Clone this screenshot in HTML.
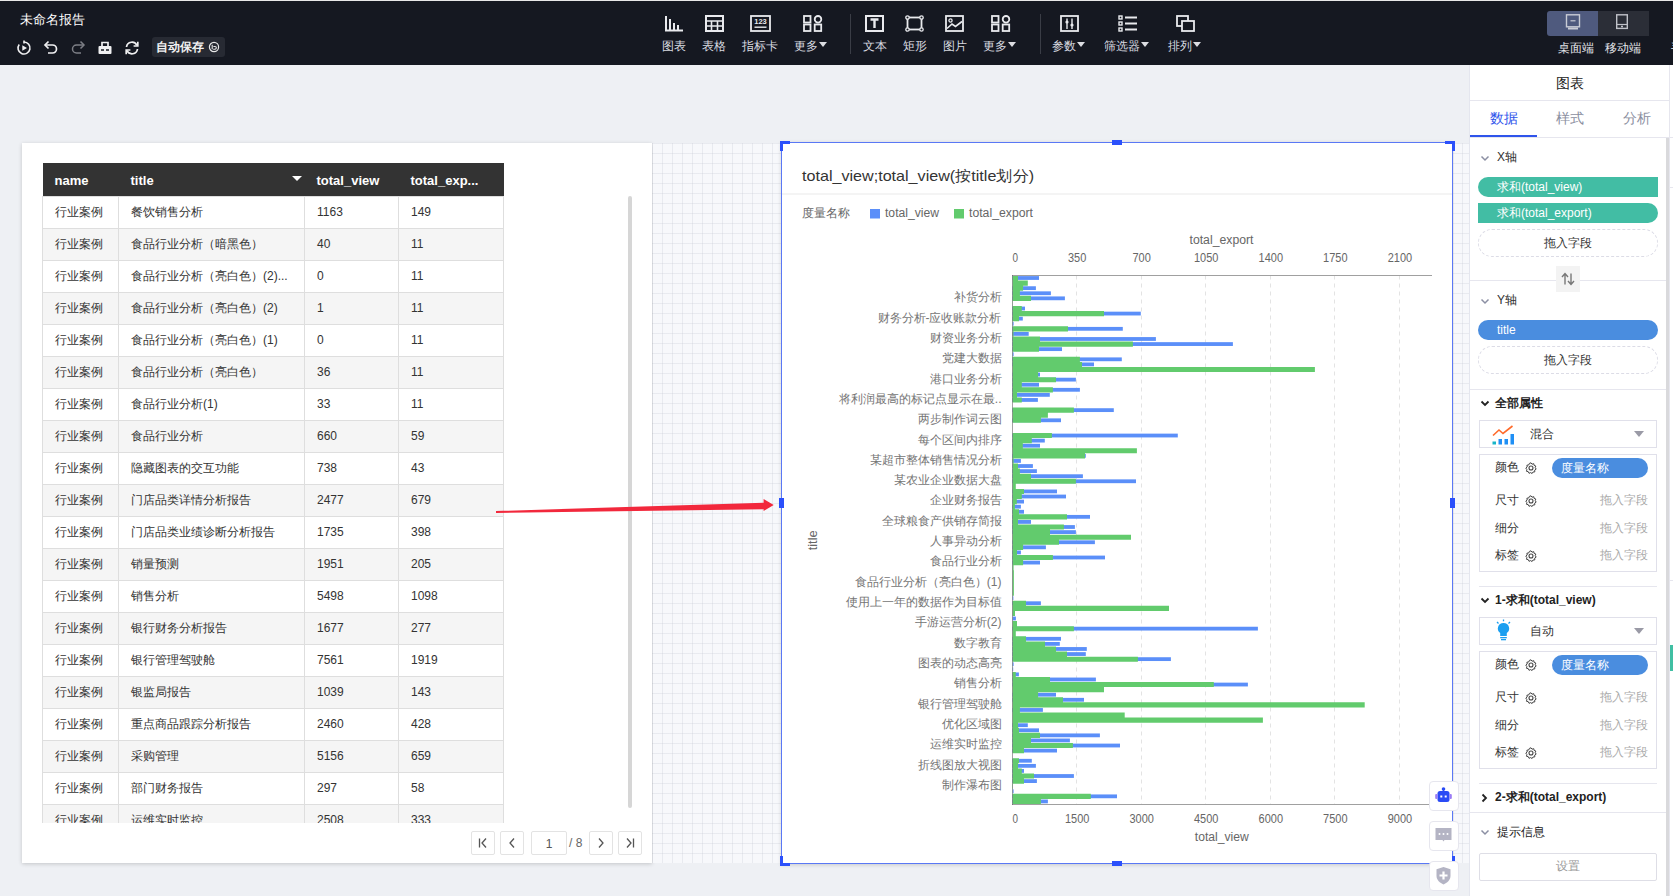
<!DOCTYPE html>
<html><head><meta charset="utf-8">
<style>
*{box-sizing:border-box;margin:0;padding:0}
html,body{width:1673px;height:896px;overflow:hidden;background:#eef0f4;font-family:"Liberation Sans",sans-serif;color:#333}
.abs{position:absolute}
#top{position:absolute;left:0;top:0;width:1673px;height:65px;background:#151821;border-top:1px solid #e8e8e8}
.tl{font-weight:500}
.t{position:absolute;white-space:nowrap;line-height:1}
.tb{position:absolute;color:#d6d8de;font-size:12px;text-align:center;white-space:nowrap}
.tb svg{position:absolute}
#paper{position:absolute;left:22px;top:143px;width:1447px;height:720px;background-color:#f7f8fb;
 background-image:linear-gradient(rgba(195,198,210,.28) 1px,transparent 1px),linear-gradient(90deg,rgba(195,198,210,.28) 1px,transparent 1px);
 background-size:10px 10px;background-position:0 0}
#tcard{position:absolute;left:22px;top:143px;width:630px;height:720px;background:#fff;box-shadow:0 1px 4px rgba(0,0,0,.18)}
table{border-collapse:collapse;position:absolute;left:42px;top:163px;table-layout:fixed}
#tclip{position:absolute;left:42px;top:163px;width:462px;height:660px;overflow:hidden}
#tclip table{left:0;top:0}
th{background:#333;color:#fff;font-weight:bold;font-size:13px;height:33px;text-align:left;padding-left:12px;padding-top:2px}
td{height:32px;font-size:12px;color:#333;border:1px solid #dedede;padding-left:12px;white-space:nowrap;overflow:hidden}
tr:nth-child(odd) td{background:#f5f5f5}
#ccard{position:absolute;left:781px;top:142px;width:672px;height:722px;background:#fff;border:1px solid #5a78f5;box-shadow:0 1px 4px rgba(0,0,0,.16)}
#panel{position:absolute;left:1469px;top:65px;width:204px;height:831px;background:#fff;border-left:1px solid #e4e6ee}
.pg{position:absolute;top:831px;width:24px;height:24px;border:1px solid #e3e3e3;border-radius:2px;background:#fff}
.pg svg{position:absolute;left:-1px;top:-1px}
.fb{position:absolute;left:1429px;width:30px;height:30px;background:#fff;border:1px solid #e6e6ee;border-radius:4px}
.fb svg{position:absolute;left:-1px;top:-1px}
.paper2{position:absolute;top:143px;height:720px;background-color:#f7f8fb;background-image:linear-gradient(rgba(195,198,210,.28) 1px,transparent 1px),linear-gradient(90deg,rgba(195,198,210,.28) 1px,transparent 1px);background-size:10px 10px}
</style></head><body>
<div id="top">
 <div class="t" style="left:20px;top:12px;font-size:13px;color:#fff">未命名报告</div>
<svg class="abs" style="left:664px;top:14px" width="21" height="18" viewBox="0 0 21 18"><path d="M2 1V15.5H19" fill="none" stroke="#e9eaee" stroke-width="2"/><rect x="5" y="4" width="2" height="11" fill="#e9eaee"/><rect x="9" y="8" width="2" height="7" fill="#e9eaee"/><rect x="13" y="10" width="2" height="5" fill="#e9eaee"/></svg>
<div class="t" style="left:662px;top:39px;font-size:12px;color:#d9dbe0">图表</div>
<svg class="abs" style="left:705px;top:14px" width="21" height="18" viewBox="0 0 21 18"><rect x="1" y="1" width="17" height="15" fill="none" stroke="#e9eaee" stroke-width="2"/><path d="M1 6H18M1 11H18M6.5 6V16M12.5 6V16" stroke="#e9eaee" stroke-width="1.6"/></svg>
<div class="t" style="left:702px;top:39px;font-size:12px;color:#d9dbe0">表格</div>
<svg class="abs" style="left:750px;top:14px" width="21" height="18" viewBox="0 0 21 18"><rect x="1" y="1" width="19" height="15" fill="none" stroke="#e9eaee" stroke-width="1.8"/><text x="10.5" y="9" font-size="7.5" font-family="Liberation Sans" font-weight="bold" fill="#e9eaee" text-anchor="middle">123</text><path d="M4.5 12.2H16.5" stroke="#e9eaee" stroke-width="1.4"/></svg>
<div class="t" style="left:742px;top:39px;font-size:12px;color:#d9dbe0">指标卡</div>
<svg class="abs" style="left:803px;top:14px" width="21" height="18" viewBox="0 0 21 18"><rect x="1" y="1" width="6.5" height="6.5" fill="none" stroke="#e9eaee" stroke-width="1.8"/><circle cx="15" cy="4.3" r="3.3" fill="none" stroke="#e9eaee" stroke-width="1.8"/><rect x="1" y="9.5" width="6.5" height="6.5" fill="none" stroke="#e9eaee" stroke-width="1.8"/><rect x="11.7" y="9.5" width="6.5" height="6.5" fill="none" stroke="#e9eaee" stroke-width="1.8"/></svg>
<div class="t" style="left:794px;top:39px;font-size:12px;color:#d9dbe0">更多<span style="display:inline-block;width:0;height:0;border-left:4px solid transparent;border-right:4px solid transparent;border-top:5px solid #dcdde2;vertical-align:3px;margin-left:1px"></span></div>
<svg class="abs" style="left:865px;top:14px" width="21" height="18" viewBox="0 0 21 18"><rect x="1" y="1" width="17" height="15" fill="none" stroke="#e9eaee" stroke-width="2"/><path d="M5.5 4.5H13.5M9.5 4.5V13" stroke="#e9eaee" stroke-width="2.4"/></svg>
<div class="t" style="left:863px;top:39px;font-size:12px;color:#d9dbe0">文本</div>
<svg class="abs" style="left:905px;top:14px" width="21" height="18" viewBox="0 0 21 18"><rect x="2.5" y="2.5" width="14" height="12" fill="none" stroke="#e9eaee" stroke-width="1.8"/><g fill="#151821" stroke="#e9eaee" stroke-width="1.3"><circle cx="2.5" cy="2.5" r="1.7"/><circle cx="16.5" cy="2.5" r="1.7"/><circle cx="2.5" cy="14.5" r="1.7"/><circle cx="16.5" cy="14.5" r="1.7"/></g></svg>
<div class="t" style="left:903px;top:39px;font-size:12px;color:#d9dbe0">矩形</div>
<svg class="abs" style="left:945px;top:14px" width="21" height="18" viewBox="0 0 21 18"><rect x="1" y="1" width="17" height="15" fill="none" stroke="#e9eaee" stroke-width="1.8"/><circle cx="5.5" cy="5.5" r="1.6" fill="none" stroke="#e9eaee" stroke-width="1.3"/><path d="M2 13.5L7 9L10.5 11.5L17 6.5" fill="none" stroke="#e9eaee" stroke-width="1.6"/></svg>
<div class="t" style="left:943px;top:39px;font-size:12px;color:#d9dbe0">图片</div>
<svg class="abs" style="left:991px;top:14px" width="21" height="18" viewBox="0 0 21 18"><rect x="1" y="1" width="6.5" height="6.5" fill="none" stroke="#e9eaee" stroke-width="1.8"/><circle cx="15" cy="4.3" r="3.3" fill="none" stroke="#e9eaee" stroke-width="1.8"/><rect x="1" y="9.5" width="6.5" height="6.5" fill="none" stroke="#e9eaee" stroke-width="1.8"/><rect x="11.7" y="9.5" width="6.5" height="6.5" fill="none" stroke="#e9eaee" stroke-width="1.8"/></svg>
<div class="t" style="left:983px;top:39px;font-size:12px;color:#d9dbe0">更多<span style="display:inline-block;width:0;height:0;border-left:4px solid transparent;border-right:4px solid transparent;border-top:5px solid #dcdde2;vertical-align:3px;margin-left:1px"></span></div>
<svg class="abs" style="left:1060px;top:14px" width="21" height="18" viewBox="0 0 21 18"><rect x="1" y="1" width="17" height="15" fill="none" stroke="#e9eaee" stroke-width="1.8"/><path d="M7 3.5V14M12 3.5V14" stroke="#e9eaee" stroke-width="1.4"/><circle cx="7" cy="7" r="1.6" fill="#e9eaee"/><circle cx="12" cy="10" r="1.6" fill="#e9eaee"/></svg>
<div class="t" style="left:1052px;top:39px;font-size:12px;color:#d9dbe0">参数<span style="display:inline-block;width:0;height:0;border-left:4px solid transparent;border-right:4px solid transparent;border-top:5px solid #dcdde2;vertical-align:3px;margin-left:1px"></span></div>
<svg class="abs" style="left:1118px;top:14px" width="21" height="18" viewBox="0 0 21 18"><g fill="none" stroke="#e9eaee" stroke-width="1.4"><rect x="1" y="1" width="3" height="3"/><rect x="1" y="7" width="3" height="3"/><rect x="1" y="13" width="3" height="3"/></g><path d="M7 2.5H19M7 8.5H19M7 14.5H19" stroke="#e9eaee" stroke-width="1.8"/></svg>
<div class="t" style="left:1104px;top:39px;font-size:12px;color:#d9dbe0">筛选器<span style="display:inline-block;width:0;height:0;border-left:4px solid transparent;border-right:4px solid transparent;border-top:5px solid #dcdde2;vertical-align:3px;margin-left:1px"></span></div>
<svg class="abs" style="left:1176px;top:14px" width="21" height="18" viewBox="0 0 21 18"><rect x="1" y="1" width="11" height="10" fill="none" stroke="#e9eaee" stroke-width="1.8"/><rect x="6" y="6" width="12" height="10" fill="#151821" stroke="#e9eaee" stroke-width="1.8"/></svg>
<div class="t" style="left:1168px;top:39px;font-size:12px;color:#d9dbe0">排列<span style="display:inline-block;width:0;height:0;border-left:4px solid transparent;border-right:4px solid transparent;border-top:5px solid #dcdde2;vertical-align:3px;margin-left:1px"></span></div>
<div class="abs" style="left:850px;top:13px;width:1px;height:40px;background:#3a3d46"></div>
<div class="abs" style="left:1040px;top:13px;width:1px;height:40px;background:#3a3d46"></div>
<svg class="abs" style="left:16px;top:39px" width="16" height="16" viewBox="0 0 16 16"><path d="M8 2A6 6 0 1 1 3.2 4.4" fill="none" stroke="#f0f0f2" stroke-width="1.6"/><path d="M8 0.5V3.5" stroke="#f0f0f2" stroke-width="1.6"/><path d="M6.3 5.3L11 8L6.3 10.7Z" fill="#f0f0f2"/></svg>
<svg class="abs" style="left:43px;top:39px" width="16" height="16" viewBox="0 0 16 16"><path d="M2.5 5H9.5A4 4 0 0 1 9.5 13H5" fill="none" stroke="#f0f0f2" stroke-width="1.7"/><path d="M5.5 1.5L2 5L5.5 8.5" fill="none" stroke="#f0f0f2" stroke-width="1.7"/></svg>
<svg class="abs" style="left:70px;top:39px" width="16" height="16" viewBox="0 0 16 16"><path d="M13.5 5H6.5A4 4 0 0 0 6.5 13H11" fill="none" stroke="#7d7f86" stroke-width="1.5"/><path d="M10.5 1.5L14 5L10.5 8.5" fill="none" stroke="#7d7f86" stroke-width="1.5"/></svg>
<svg class="abs" style="left:97px;top:39px" width="16" height="16" viewBox="0 0 16 16"><path d="M5 6V2.5H11V6" fill="none" stroke="#f0f0f2" stroke-width="1.7"/><rect x="1.5" y="6" width="13" height="8" rx="1" fill="#f0f0f2"/><path d="M4 10H7M9 10H12" stroke="#151821" stroke-width="1.4"/></svg>
<svg class="abs" style="left:124px;top:39px" width="16" height="16" viewBox="0 0 16 16"><path d="M2.5 7A5.5 5.5 0 0 1 13 5.5M13.5 9A5.5 5.5 0 0 1 3 10.5" fill="none" stroke="#f0f0f2" stroke-width="1.7"/><path d="M13.8 1.8V6H9.6M2.2 14.2V10H6.4" fill="none" stroke="#f0f0f2" stroke-width="1.7"/></svg>
<div class="abs" style="left:152px;top:36px;width:73px;height:20px;background:#272a33;border-radius:3px"></div>
<div class="t" style="left:156px;top:40px;font-size:12px;color:#f2f2f2;font-weight:bold">自动保存</div>
<svg class="abs" style="left:208px;top:40px" width="12" height="12" viewBox="0 0 12 12"><circle cx="6" cy="6" r="4.6" fill="none" stroke="#e8e8e8" stroke-width="1.2"/><path d="M4.2 3.8V8.2M5.2 8.2H7A1.3 1.3 0 0 0 7 5.5H5.4" fill="none" stroke="#e8e8e8" stroke-width="1.1"/></svg>
<div class="abs" style="left:1547px;top:10px;width:51px;height:25px;background:#4f5a7e;border-radius:3px 0 0 3px"></div>
<div class="abs" style="left:1598px;top:10px;width:51px;height:25px;background:#2b2e37;border-radius:0"></div>
<svg class="abs" style="left:1565px;top:13px" width="16" height="16" viewBox="0 0 16 16"><rect x="1.5" y="0.8" width="13" height="12" fill="none" stroke="#c9ccd6" stroke-width="1.4"/><path d="M5.5 6.8H10.5" stroke="#c9ccd6" stroke-width="1.2"/><rect x="3" y="13.5" width="10" height="2" fill="#c9ccd6"/></svg>
<svg class="abs" style="left:1615px;top:13px" width="14" height="16" viewBox="0 0 14 16"><rect x="1.7" y="0.8" width="10.6" height="13.6" fill="none" stroke="#c0c2c9" stroke-width="1.4"/><path d="M1.7 10.5H12.3" stroke="#c0c2c9" stroke-width="1.2"/><rect x="6" y="11.7" width="2" height="1.6" fill="#c0c2c9"/></svg>
<div class="t" style="left:1558px;top:41px;font-size:12px;color:#e4e5ea">桌面端</div>
<div class="t" style="left:1605px;top:41px;font-size:12px;color:#e4e5ea">移动端</div>
<div class="t" style="left:1671px;top:41px;font-size:12px;color:#e4e5ea">手</div>
</div>
<div id="paper"></div>
<div id="tcard"></div>
<div id="tclip"><table>
<colgroup><col style="width:76px"><col style="width:186px"><col style="width:94px"><col style="width:105px"></colgroup>
<tr><th>name</th><th style="position:relative">title<span style="position:absolute;left:173px;top:13px;width:0;height:0;border-left:5px solid transparent;border-right:5px solid transparent;border-top:5px solid #fff"></span></th><th>total_view</th><th>total_exp...</th></tr>
<tr><td>行业案例</td><td>餐饮销售分析</td><td class="n">1163</td><td class="n">149</td></tr><tr><td>行业案例</td><td>食品行业分析（暗黑色）</td><td class="n">40</td><td class="n">11</td></tr><tr><td>行业案例</td><td>食品行业分析（亮白色）(2)...</td><td class="n">0</td><td class="n">11</td></tr><tr><td>行业案例</td><td>食品行业分析（亮白色）(2)</td><td class="n">1</td><td class="n">11</td></tr><tr><td>行业案例</td><td>食品行业分析（亮白色）(1)</td><td class="n">0</td><td class="n">11</td></tr><tr><td>行业案例</td><td>食品行业分析（亮白色）</td><td class="n">36</td><td class="n">11</td></tr><tr><td>行业案例</td><td>食品行业分析(1)</td><td class="n">33</td><td class="n">11</td></tr><tr><td>行业案例</td><td>食品行业分析</td><td class="n">660</td><td class="n">59</td></tr><tr><td>行业案例</td><td>隐藏图表的交互功能</td><td class="n">738</td><td class="n">43</td></tr><tr><td>行业案例</td><td>门店品类详情分析报告</td><td class="n">2477</td><td class="n">679</td></tr><tr><td>行业案例</td><td>门店品类业绩诊断分析报告</td><td class="n">1735</td><td class="n">398</td></tr><tr><td>行业案例</td><td>销量预测</td><td class="n">1951</td><td class="n">205</td></tr><tr><td>行业案例</td><td>销售分析</td><td class="n">5498</td><td class="n">1098</td></tr><tr><td>行业案例</td><td>银行财务分析报告</td><td class="n">1677</td><td class="n">277</td></tr><tr><td>行业案例</td><td>银行管理驾驶舱</td><td class="n">7561</td><td class="n">1919</td></tr><tr><td>行业案例</td><td>银监局报告</td><td class="n">1039</td><td class="n">143</td></tr><tr><td>行业案例</td><td>重点商品跟踪分析报告</td><td class="n">2460</td><td class="n">428</td></tr><tr><td>行业案例</td><td>采购管理</td><td class="n">5156</td><td class="n">659</td></tr><tr><td>行业案例</td><td>部门财务报告</td><td class="n">297</td><td class="n">58</td></tr><tr><td>行业案例</td><td>运维实时监控</td><td class="n">2508</td><td class="n">333</td></tr>
</table></div>
<div class="abs" style="left:628px;top:196px;width:4px;height:612px;background:#d6d6d6;border-radius:2px"></div>

<div class="pg" style="left:471px"><svg width="24" height="24" viewBox="0 0 24 24"><path d="M8.5 7.5V16.5M15 7.5L11 12L15 16.5" fill="none" stroke="#555" stroke-width="1.3"/></svg></div>
<div class="pg" style="left:500px"><svg width="24" height="24" viewBox="0 0 24 24"><path d="M14 7.5L10 12L14 16.5" fill="none" stroke="#555" stroke-width="1.3"/></svg></div>
<div class="pg" style="left:531px;width:36px;font-size:12px;color:#555;text-align:center;line-height:24px">1</div>
<div class="t" style="left:569px;top:837px;font-size:12px;color:#666">/ 8</div>
<div class="pg" style="left:589px"><svg width="24" height="24" viewBox="0 0 24 24"><path d="M10 7.5L14 12L10 16.5" fill="none" stroke="#555" stroke-width="1.3"/></svg></div>
<div class="pg" style="left:618px"><svg width="24" height="24" viewBox="0 0 24 24"><path d="M15.5 7.5V16.5M9 7.5L13 12L9 16.5" fill="none" stroke="#555" stroke-width="1.3"/></svg></div>

<div class="paper2" style="left:653px;width:128px;background-position:-631px 0"></div>
<div id="ccard"></div>
<div class="paper2" style="left:1454px;width:15px;background-position:-1432px 0"></div>
<!--CHART-->
<svg class="abs" style="left:782px;top:143px" width="670" height="719" viewBox="782 143 670 719" font-family="Liberation Sans, sans-serif">
<text x="802" y="180.6" font-size="15" fill="#333" textLength="232" lengthAdjust="spacingAndGlyphs">total_view;total_view(按title划分)</text>
<rect x="782" y="193.5" width="670" height="1" fill="#e9e9e9"/>
<text x="802" y="216.7" font-size="12" fill="#666">度量名称</text>
<rect x="870" y="209" width="10" height="9.5" fill="#5b8ff9"/>
<text x="885" y="217" font-size="12" fill="#666" textLength="54" lengthAdjust="spacingAndGlyphs">total_view</text>
<rect x="954" y="209" width="10" height="9.5" fill="#62cb6d"/>
<text x="969" y="217" font-size="12" fill="#666" textLength="64" lengthAdjust="spacingAndGlyphs">total_export</text>
<line x1="1076.5" y1="275.5" x2="1076.5" y2="804.0" stroke="#e3e3e3" stroke-width="1" stroke-dasharray="4 4"/>
<line x1="1141.5" y1="275.5" x2="1141.5" y2="804.0" stroke="#e3e3e3" stroke-width="1" stroke-dasharray="4 4"/>
<line x1="1205.5" y1="275.5" x2="1205.5" y2="804.0" stroke="#e3e3e3" stroke-width="1" stroke-dasharray="4 4"/>
<line x1="1270.5" y1="275.5" x2="1270.5" y2="804.0" stroke="#e3e3e3" stroke-width="1" stroke-dasharray="4 4"/>
<line x1="1334.5" y1="275.5" x2="1334.5" y2="804.0" stroke="#e3e3e3" stroke-width="1" stroke-dasharray="4 4"/>
<line x1="1399.5" y1="275.5" x2="1399.5" y2="804.0" stroke="#e3e3e3" stroke-width="1" stroke-dasharray="4 4"/>
<rect x="1012.6" y="276.10" width="26.4" height="3.8" fill="#5b8ff9"/>
<rect x="1012.6" y="286.26" width="23.3" height="3.8" fill="#5b8ff9"/>
<rect x="1012.6" y="291.35" width="38.3" height="3.8" fill="#5b8ff9"/>
<rect x="1012.6" y="296.43" width="52.3" height="3.8" fill="#5b8ff9"/>
<rect x="1012.6" y="306.59" width="12.4" height="3.8" fill="#5b8ff9"/>
<rect x="1012.6" y="311.67" width="128.2" height="3.8" fill="#5b8ff9"/>
<rect x="1012.6" y="316.75" width="10.2" height="3.8" fill="#5b8ff9"/>
<rect x="1012.6" y="321.84" width="1.0" height="3.8" fill="#5b8ff9"/>
<rect x="1012.6" y="326.92" width="110.2" height="3.8" fill="#5b8ff9"/>
<rect x="1012.6" y="332.00" width="16.1" height="3.8" fill="#5b8ff9"/>
<rect x="1012.6" y="337.08" width="143.3" height="3.8" fill="#5b8ff9"/>
<rect x="1012.6" y="342.16" width="220.3" height="3.8" fill="#5b8ff9"/>
<rect x="1012.6" y="347.24" width="49.4" height="3.8" fill="#5b8ff9"/>
<rect x="1012.6" y="352.33" width="1.0" height="3.8" fill="#5b8ff9"/>
<rect x="1012.6" y="357.41" width="109.2" height="3.8" fill="#5b8ff9"/>
<rect x="1012.6" y="362.49" width="81.4" height="3.8" fill="#5b8ff9"/>
<rect x="1012.6" y="372.65" width="27.4" height="3.8" fill="#5b8ff9"/>
<rect x="1012.6" y="377.73" width="63.3" height="3.8" fill="#5b8ff9"/>
<rect x="1012.6" y="382.82" width="26.4" height="3.8" fill="#5b8ff9"/>
<rect x="1012.6" y="387.90" width="67.3" height="3.8" fill="#5b8ff9"/>
<rect x="1012.6" y="392.98" width="37.2" height="3.8" fill="#5b8ff9"/>
<rect x="1012.6" y="398.06" width="25.3" height="3.8" fill="#5b8ff9"/>
<rect x="1012.6" y="408.23" width="101.2" height="3.8" fill="#5b8ff9"/>
<rect x="1012.6" y="418.39" width="48.4" height="3.8" fill="#5b8ff9"/>
<rect x="1012.6" y="433.63" width="165.2" height="3.8" fill="#5b8ff9"/>
<rect x="1012.6" y="438.72" width="32.2" height="3.8" fill="#5b8ff9"/>
<rect x="1012.6" y="443.80" width="27.4" height="3.8" fill="#5b8ff9"/>
<rect x="1012.6" y="453.96" width="73.2" height="3.8" fill="#5b8ff9"/>
<rect x="1012.6" y="459.04" width="8.3" height="3.8" fill="#5b8ff9"/>
<rect x="1012.6" y="464.12" width="20.3" height="3.8" fill="#5b8ff9"/>
<rect x="1012.6" y="469.21" width="24.3" height="3.8" fill="#5b8ff9"/>
<rect x="1012.6" y="474.29" width="70.3" height="3.8" fill="#5b8ff9"/>
<rect x="1012.6" y="479.37" width="123.4" height="3.8" fill="#5b8ff9"/>
<rect x="1012.6" y="489.53" width="44.4" height="3.8" fill="#5b8ff9"/>
<rect x="1012.6" y="494.61" width="53.4" height="3.8" fill="#5b8ff9"/>
<rect x="1012.6" y="499.70" width="11.4" height="3.8" fill="#5b8ff9"/>
<rect x="1012.6" y="504.78" width="8.3" height="3.8" fill="#5b8ff9"/>
<rect x="1012.6" y="509.86" width="11.4" height="3.8" fill="#5b8ff9"/>
<rect x="1012.6" y="514.94" width="77.4" height="3.8" fill="#5b8ff9"/>
<rect x="1012.6" y="520.02" width="18.4" height="3.8" fill="#5b8ff9"/>
<rect x="1012.6" y="525.10" width="62.3" height="3.8" fill="#5b8ff9"/>
<rect x="1012.6" y="530.19" width="63.3" height="3.8" fill="#5b8ff9"/>
<rect x="1012.6" y="540.35" width="82.3" height="3.8" fill="#5b8ff9"/>
<rect x="1012.6" y="545.43" width="33.3" height="3.8" fill="#5b8ff9"/>
<rect x="1012.6" y="550.51" width="8.3" height="3.8" fill="#5b8ff9"/>
<rect x="1012.6" y="555.60" width="92.4" height="3.8" fill="#5b8ff9"/>
<rect x="1012.6" y="560.68" width="27.4" height="3.8" fill="#5b8ff9"/>
<rect x="1012.6" y="596.25" width="0.8" height="3.8" fill="#5b8ff9"/>
<rect x="1012.6" y="601.33" width="28.3" height="3.8" fill="#5b8ff9"/>
<rect x="1012.6" y="616.58" width="3.3" height="3.8" fill="#5b8ff9"/>
<rect x="1012.6" y="626.74" width="245.3" height="3.8" fill="#5b8ff9"/>
<rect x="1012.6" y="636.90" width="48.4" height="3.8" fill="#5b8ff9"/>
<rect x="1012.6" y="641.98" width="47.2" height="3.8" fill="#5b8ff9"/>
<rect x="1012.6" y="647.07" width="74.2" height="3.8" fill="#5b8ff9"/>
<rect x="1012.6" y="652.15" width="73.2" height="3.8" fill="#5b8ff9"/>
<rect x="1012.6" y="657.23" width="158.3" height="3.8" fill="#5b8ff9"/>
<rect x="1012.6" y="662.31" width="1.0" height="3.8" fill="#5b8ff9"/>
<rect x="1012.6" y="667.39" width="0.6" height="3.8" fill="#5b8ff9"/>
<rect x="1012.6" y="672.48" width="6.3" height="3.8" fill="#5b8ff9"/>
<rect x="1012.6" y="677.56" width="83.3" height="3.8" fill="#5b8ff9"/>
<rect x="1012.6" y="682.64" width="235.3" height="3.8" fill="#5b8ff9"/>
<rect x="1012.6" y="692.80" width="43.4" height="3.8" fill="#5b8ff9"/>
<rect x="1012.6" y="697.88" width="71.4" height="3.8" fill="#5b8ff9"/>
<rect x="1012.6" y="708.05" width="30.3" height="3.8" fill="#5b8ff9"/>
<rect x="1012.6" y="723.29" width="15.2" height="3.8" fill="#5b8ff9"/>
<rect x="1012.6" y="728.37" width="26.4" height="3.8" fill="#5b8ff9"/>
<rect x="1012.6" y="733.46" width="87.3" height="3.8" fill="#5b8ff9"/>
<rect x="1012.6" y="738.54" width="57.3" height="3.8" fill="#5b8ff9"/>
<rect x="1012.6" y="743.62" width="107.4" height="3.8" fill="#5b8ff9"/>
<rect x="1012.6" y="748.70" width="44.4" height="3.8" fill="#5b8ff9"/>
<rect x="1012.6" y="758.86" width="19.2" height="3.8" fill="#5b8ff9"/>
<rect x="1012.6" y="763.95" width="23.3" height="3.8" fill="#5b8ff9"/>
<rect x="1012.6" y="769.03" width="11.4" height="3.8" fill="#5b8ff9"/>
<rect x="1012.6" y="774.11" width="61.3" height="3.8" fill="#5b8ff9"/>
<rect x="1012.6" y="779.19" width="24.3" height="3.8" fill="#5b8ff9"/>
<rect x="1012.6" y="789.35" width="1.0" height="3.8" fill="#5b8ff9"/>
<rect x="1012.6" y="794.44" width="104.4" height="3.8" fill="#5b8ff9"/>
<rect x="1012.6" y="799.52" width="35.3" height="3.8" fill="#5b8ff9"/>
<path d="M1012.6 275.5 H1018.00 V280.58 H1027.80 V285.66 H1023.10 V290.75 H1019.90 V295.83 H1031.00 V300.91 H1012.80 V305.99 H1021.80 V311.07 H1104.00 V316.15 H1019.00 V321.24 H1012.60 V326.32 H1068.00 V331.40 H1013.50 V336.48 H1040.00 V341.56 H1132.90 V346.64 H1039.00 V351.73 H1012.60 V356.81 H1079.90 V361.89 H1082.00 V366.97 H1314.90 V372.05 H1038.10 V377.13 H1056.00 V382.22 H1021.80 V387.30 H1052.90 V392.38 H1017.00 V397.46 H1021.80 V402.54 H1012.60 V407.62 H1073.90 V412.71 H1047.90 V417.79 H1040.90 V422.87 H1012.60 V427.95 H1012.60 V433.03 H1051.90 V438.12 H1031.80 V443.20 H1022.80 V448.28 H1136.90 V453.36 H1085.00 V458.44 H1013.60 V463.52 H1018.00 V468.61 H1019.90 V473.69 H1031.00 V478.77 H1075.90 V483.85 H1015.80 V488.93 H1024.00 V494.01 H1021.80 V499.10 H1016.80 V504.18 H1014.90 V509.26 H1019.00 V514.34 H1067.00 V519.42 H1018.00 V524.50 H1063.90 V529.59 H1050.00 V534.67 H1131.00 V539.75 H1059.00 V544.83 H1023.10 V549.91 H1017.00 V555.00 H1052.90 V560.08 H1023.10 V565.16 H1013.60 V570.24 H1013.90 V575.32 H1013.90 V580.40 H1013.90 V585.49 H1013.90 V590.57 H1013.90 V595.65 H1012.60 V600.73 H1026.00 V605.81 H1169.00 V610.89 H1015.00 V615.98 H1012.60 V621.06 H1017.00 V626.14 H1073.90 V631.22 H1015.80 V636.30 H1026.00 V641.38 H1045.00 V646.47 H1056.00 V651.55 H1067.00 V656.63 H1137.90 V661.71 H1012.60 V666.79 H1012.60 V671.88 H1015.80 V676.96 H1050.00 V682.04 H1213.80 V687.12 H1104.00 V692.20 H1038.10 V697.28 H1063.00 V702.37 H1364.70 V707.45 H1019.90 V712.53 H1124.70 V717.61 H1262.90 V722.69 H1018.00 V727.77 H1019.00 V732.86 H1040.00 V737.94 H1031.00 V743.02 H1072.90 V748.10 H1024.00 V753.18 H1012.60 V758.26 H1019.00 V763.35 H1018.00 V768.43 H1021.80 V773.51 H1034.00 V778.59 H1024.00 V783.67 H1013.00 V788.75 H1012.60 V793.84 H1090.80 V798.92 H1040.90 V804.00 H1012.6 Z" fill="#62cb6d"/>
<rect x="1012" y="275" width="420" height="1" fill="#a0a0a0"/>
<rect x="1012" y="804" width="420" height="1" fill="#a0a0a0"/>
<rect x="1012" y="275" width="1" height="530" fill="#555" fill-opacity="0.55"/>
<text x="1012.6" y="262" font-size="12.5" fill="#666" textLength="5.5" lengthAdjust="spacingAndGlyphs">0</text>
<text x="1012.6" y="823" font-size="12.5" fill="#666" textLength="5.5" lengthAdjust="spacingAndGlyphs">0</text>
<text x="1068.0" y="262" font-size="12.5" fill="#666" textLength="18.3" lengthAdjust="spacingAndGlyphs">350</text>
<text x="1065.0" y="823" font-size="12.5" fill="#666" textLength="24.4" lengthAdjust="spacingAndGlyphs">1500</text>
<text x="1132.5" y="262" font-size="12.5" fill="#666" textLength="18.3" lengthAdjust="spacingAndGlyphs">700</text>
<text x="1129.5" y="823" font-size="12.5" fill="#666" textLength="24.4" lengthAdjust="spacingAndGlyphs">3000</text>
<text x="1194.0" y="262" font-size="12.5" fill="#666" textLength="24.4" lengthAdjust="spacingAndGlyphs">1050</text>
<text x="1194.0" y="823" font-size="12.5" fill="#666" textLength="24.4" lengthAdjust="spacingAndGlyphs">4500</text>
<text x="1258.6" y="262" font-size="12.5" fill="#666" textLength="24.4" lengthAdjust="spacingAndGlyphs">1400</text>
<text x="1258.6" y="823" font-size="12.5" fill="#666" textLength="24.4" lengthAdjust="spacingAndGlyphs">6000</text>
<text x="1323.1" y="262" font-size="12.5" fill="#666" textLength="24.4" lengthAdjust="spacingAndGlyphs">1750</text>
<text x="1323.1" y="823" font-size="12.5" fill="#666" textLength="24.4" lengthAdjust="spacingAndGlyphs">7500</text>
<text x="1387.7" y="262" font-size="12.5" fill="#666" textLength="24.4" lengthAdjust="spacingAndGlyphs">2100</text>
<text x="1387.7" y="823" font-size="12.5" fill="#666" textLength="24.4" lengthAdjust="spacingAndGlyphs">9000</text>
<text x="1189.5" y="244.2" font-size="12" fill="#666" textLength="64" lengthAdjust="spacingAndGlyphs">total_export</text>
<text x="1194.8" y="841.1" font-size="12" fill="#666" textLength="54" lengthAdjust="spacingAndGlyphs">total_view</text>
<text x="0" y="0" font-size="12" fill="#666" transform="translate(816.5,550.3) rotate(-90)" textLength="20" lengthAdjust="spacingAndGlyphs">title</text>
<text x="1001.5" y="301.2" font-size="12" fill="#757575" text-anchor="end">补货分析</text>
<text x="1001.5" y="321.5" font-size="12" fill="#757575" text-anchor="end">财务分析-应收账款分析</text>
<text x="1001.5" y="341.8" font-size="12" fill="#757575" text-anchor="end">财资业务分析</text>
<text x="1001.5" y="362.1" font-size="12" fill="#757575" text-anchor="end">党建大数据</text>
<text x="1001.5" y="382.5" font-size="12" fill="#757575" text-anchor="end">港口业务分析</text>
<text x="1001.5" y="402.8" font-size="12" fill="#757575" text-anchor="end">将利润最高的标记点显示在最..</text>
<text x="1001.5" y="423.1" font-size="12" fill="#757575" text-anchor="end">两步制作词云图</text>
<text x="1001.5" y="443.5" font-size="12" fill="#757575" text-anchor="end">每个区间内排序</text>
<text x="1001.5" y="463.8" font-size="12" fill="#757575" text-anchor="end">某超市整体销售情况分析</text>
<text x="1001.5" y="484.1" font-size="12" fill="#757575" text-anchor="end">某农业企业数据大盘</text>
<text x="1001.5" y="504.4" font-size="12" fill="#757575" text-anchor="end">企业财务报告</text>
<text x="1001.5" y="524.8" font-size="12" fill="#757575" text-anchor="end">全球粮食产供销存简报</text>
<text x="1001.5" y="545.1" font-size="12" fill="#757575" text-anchor="end">人事异动分析</text>
<text x="1001.5" y="565.4" font-size="12" fill="#757575" text-anchor="end">食品行业分析</text>
<text x="1001.5" y="585.7" font-size="12" fill="#757575" text-anchor="end">食品行业分析（亮白色）(1)</text>
<text x="1001.5" y="606.1" font-size="12" fill="#757575" text-anchor="end">使用上一年的数据作为目标值</text>
<text x="1001.5" y="626.4" font-size="12" fill="#757575" text-anchor="end">手游运营分析(2)</text>
<text x="1001.5" y="646.7" font-size="12" fill="#757575" text-anchor="end">数字教育</text>
<text x="1001.5" y="667.1" font-size="12" fill="#757575" text-anchor="end">图表的动态高亮</text>
<text x="1001.5" y="687.4" font-size="12" fill="#757575" text-anchor="end">销售分析</text>
<text x="1001.5" y="707.7" font-size="12" fill="#757575" text-anchor="end">银行管理驾驶舱</text>
<text x="1001.5" y="728.0" font-size="12" fill="#757575" text-anchor="end">优化区域图</text>
<text x="1001.5" y="748.4" font-size="12" fill="#757575" text-anchor="end">运维实时监控</text>
<text x="1001.5" y="768.7" font-size="12" fill="#757575" text-anchor="end">折线图放大视图</text>
<text x="1001.5" y="789.0" font-size="12" fill="#757575" text-anchor="end">制作瀑布图</text>
</svg>
<!--/CHART-->
<div id="panel"></div>
<!--EXTRA-->
<div class="abs" style="left:780px;top:141px;width:10px;height:3px;background:#2b50fb"></div>
<div class="abs" style="left:780px;top:141px;width:3px;height:10px;background:#2b50fb"></div>
<div class="abs" style="left:1445px;top:141px;width:10px;height:3px;background:#2b50fb"></div>
<div class="abs" style="left:1452px;top:141px;width:3px;height:10px;background:#2b50fb"></div>
<div class="abs" style="left:780px;top:863px;width:10px;height:3px;background:#2b50fb"></div>
<div class="abs" style="left:780px;top:856px;width:3px;height:10px;background:#2b50fb"></div>
<div class="abs" style="left:1445px;top:863px;width:10px;height:3px;background:#2b50fb"></div>
<div class="abs" style="left:1452px;top:856px;width:3px;height:10px;background:#2b50fb"></div>
<div class="abs" style="left:1112px;top:140px;width:10px;height:5px;background:#2b50fb"></div>
<div class="abs" style="left:1112px;top:861px;width:10px;height:5px;background:#2b50fb"></div>
<div class="abs" style="left:779px;top:498px;width:5px;height:10px;background:#2b50fb"></div>
<div class="abs" style="left:1450px;top:498px;width:5px;height:10px;background:#2b50fb"></div>
<svg class="abs" style="left:0;top:0" width="1673" height="896" viewBox="0 0 1673 896"><polygon points="496,511 763.6,502.8 763.6,499.1 773.7,505 763.6,511 763.6,509.2 496,513" fill="#f2283c"/></svg>
<div class="fb" style="top:781px"><svg width="29" height="29" viewBox="0 0 29 29"><circle cx="14.5" cy="8" r="1.8" fill="#2a4bf5"/><rect x="13.8" y="8" width="1.4" height="2.5" fill="#2a4bf5"/><rect x="8.5" y="10" width="12" height="11" rx="2.5" fill="#2a4bf5"/><rect x="6.2" y="13" width="2.3" height="5" rx="1" fill="#9b7cf5"/><rect x="20.5" y="13" width="2.3" height="5" rx="1" fill="#9b7cf5"/><rect x="11.3" y="14.5" width="2" height="2" fill="#fff"/><rect x="15.7" y="14.5" width="2" height="2" fill="#fff"/></svg></div>
<div class="fb" style="top:821px"><svg width="29" height="29" viewBox="0 0 29 29"><path d="M6.5 7H22.5V19H15.5L14.5 20.5L13.5 19H6.5Z" fill="#b4b4c4"/><circle cx="10.5" cy="13" r="1" fill="#fff"/><circle cx="14.5" cy="13" r="1" fill="#fff"/><circle cx="18.5" cy="13" r="1" fill="#fff"/></svg></div>
<div class="fb" style="top:861px"><svg width="29" height="29" viewBox="0 0 29 29"><path d="M14.5 6L21.5 8.2V15C21.5 19 18 22 14.5 23.5C11 22 7.5 19 7.5 15V8.2Z" fill="#b4b4c4"/><path d="M14.5 10.5V18.5M10.5 14.5H18.5" stroke="#fff" stroke-width="2.2"/></svg></div>
<!--/EXTRA-->
<!--PANEL-->
<div class="t" style="left:1556px;top:75.5px;font-size:14px;color:#222;">图表</div>
<div class="abs" style="left:1470px;top:100px;width:200px;height:1px;background:#e6e6ee"></div>
<div class="t" style="left:1490px;top:110.8px;font-size:14px;color:#2f54eb;">数据</div>
<div class="t" style="left:1556.3px;top:110.8px;font-size:14px;color:#8a8ea0;">样式</div>
<div class="t" style="left:1622.7px;top:110.8px;font-size:14px;color:#8a8ea0;">分析</div>
<div class="abs" style="left:1470px;top:135px;width:67px;height:2.5px;background:#2f54eb"></div>
<div class="abs" style="left:1470px;top:137px;width:203px;height:1px;background:#e6e6ee"></div>
<div class="abs" style="left:1669px;top:65px;width:1px;height:831px;background:#e6e6ee"></div>
<div class="abs" style="left:1666px;top:138px;width:3px;height:758px;background:#d9d9dc"></div>
<div class="abs" style="left:1670px;top:187px;width:3px;height:1px;background:#e6e6ee"></div>
<div class="abs" style="left:1670px;top:580px;width:3px;height:1px;background:#e6e6ee"></div>
<div class="abs" style="left:1670px;top:645px;width:3px;height:26px;background:#40bfa3"></div>
<svg class="abs" style="left:1479.5px;top:154.5px" width="10" height="7" viewBox="0 0 10 7"><path d="M1.5 1.5L5 5L8.5 1.5" fill="none" stroke="#8b8fa3" stroke-width="1.5"/></svg>
<div class="t" style="left:1497px;top:151.0px;font-size:12px;color:#333;">X轴</div>
<div class="abs" style="left:1478px;top:177px;width:180px;height:20px;background:#42bda4;border-radius:10px 0 0 10px"></div>
<div class="t" style="left:1497px;top:180.5px;font-size:12px;color:#fff;">求和(total_view)</div>
<div class="abs" style="left:1478px;top:203px;width:180px;height:20px;background:#42bda4;border-radius:0 10px 10px 0"></div>
<div class="t" style="left:1497px;top:206.5px;font-size:12px;color:#fff;">求和(total_export)</div>
<div class="abs" style="left:1478px;top:229px;width:180px;height:28px;border:1px dashed #dcdce6;border-radius:14px"></div>
<div class="t" style="left:1544px;top:236.5px;font-size:12px;color:#333;">拖入字段</div>
<div class="abs" style="left:1470px;top:280px;width:196px;height:1px;background:#e6e6ee"></div>
<div class="abs" style="left:1556px;top:266px;width:24px;height:26px;background:#f3f3f3"></div>
<svg class="abs" style="left:1560px;top:272px" width="16" height="14" viewBox="0 0 16 14"><path d="M5 12.5V2M2 5L5 1.5L8 5M11 1.5V12M8 9L11 12.5L14 9" fill="none" stroke="#777" stroke-width="1.4"/></svg>
<svg class="abs" style="left:1479.5px;top:297.5px" width="10" height="7" viewBox="0 0 10 7"><path d="M1.5 1.5L5 5L8.5 1.5" fill="none" stroke="#8b8fa3" stroke-width="1.5"/></svg>
<div class="t" style="left:1497px;top:294.0px;font-size:12px;color:#333;">Y轴</div>
<div class="abs" style="left:1478px;top:320px;width:180px;height:20px;background:#4a8ddf;border-radius:10px"></div>
<div class="t" style="left:1497px;top:323.5px;font-size:12px;color:#fff;">title</div>
<div class="abs" style="left:1478px;top:346px;width:180px;height:28px;border:1px dashed #dcdce6;border-radius:14px"></div>
<div class="t" style="left:1544px;top:353.5px;font-size:12px;color:#333;">拖入字段</div>
<div class="abs" style="left:1470px;top:389px;width:196px;height:1px;background:#e6e6ee"></div>
<svg class="abs" style="left:1479.5px;top:400px" width="10" height="7" viewBox="0 0 10 7"><path d="M1.5 1.5L5 5L8.5 1.5" fill="none" stroke="#222" stroke-width="1.8"/></svg>
<div class="t" style="left:1495px;top:396.5px;font-size:12px;color:#222;font-weight:bold">全部属性</div>
<div class="abs" style="left:1479px;top:420px;width:178px;height:28px;border:1px solid #e0e0ea"></div>
<svg class="abs" style="left:1492px;top:425px" width="23" height="20" viewBox="0 0 23 20"><path d="M1 10.5L7 5L11 8.5L20.5 1" fill="none" stroke="#ff6a2a" stroke-width="1.6"/><rect x="0.5" y="16.5" width="3.5" height="3" fill="#17b5c8"/><rect x="6.5" y="14" width="3.5" height="5.5" fill="#1f8ff5"/><rect x="12.5" y="14" width="3.5" height="5.5" fill="#1f8ff5"/><rect x="18.5" y="9" width="3.5" height="10.5" fill="#1f8ff5"/></svg>
<div class="t" style="left:1530px;top:428.0px;font-size:12px;color:#333;">混合</div>
<div class="abs" style="left:1634px;top:431px;width:0;height:0;border-left:5px solid transparent;border-right:5px solid transparent;border-top:6px solid #9a9aa6"></div>
<div class="abs" style="left:1479px;top:454px;width:178px;height:118px;border:1px solid #e0e0ea"></div>
<div class="t" style="left:1494.5px;top:461.0px;font-size:12px;color:#333;">颜色</div>
<svg class="abs" style="left:1525px;top:462px" width="12" height="12" viewBox="0 0 12 12"><circle cx="6" cy="6" r="2" fill="none" stroke="#444" stroke-width="1.1"/><path d="M6 0.8L7 2.2L8.8 1.7L9.1 3.4L10.8 4L10.2 5.7L11.2 7.1L9.7 8.1L9.8 9.9L8 10L7.1 11.5L5.6 10.6L4 11.3L3.3 9.7L1.5 9.3L1.9 7.6L0.8 6.1L2.2 5L1.9 3.2L3.7 3L4.4 1.4Z" fill="none" stroke="#444" stroke-width="1"/></svg>
<div class="abs" style="left:1552px;top:458px;width:96px;height:20px;background:#4a8ddf;border-radius:10px"></div>
<div class="t" style="left:1561px;top:461.5px;font-size:12px;color:#fff;">度量名称</div>
<div class="t" style="left:1494.5px;top:493.5px;font-size:12px;color:#333;">尺寸</div>
<svg class="abs" style="left:1525px;top:494.5px" width="12" height="12" viewBox="0 0 12 12"><circle cx="6" cy="6" r="2" fill="none" stroke="#444" stroke-width="1.1"/><path d="M6 0.8L7 2.2L8.8 1.7L9.1 3.4L10.8 4L10.2 5.7L11.2 7.1L9.7 8.1L9.8 9.9L8 10L7.1 11.5L5.6 10.6L4 11.3L3.3 9.7L1.5 9.3L1.9 7.6L0.8 6.1L2.2 5L1.9 3.2L3.7 3L4.4 1.4Z" fill="none" stroke="#444" stroke-width="1"/></svg>
<div class="t" style="left:1600px;top:493.5px;font-size:12px;color:#aaa;">拖入字段</div>
<div class="t" style="left:1494.5px;top:521.5px;font-size:12px;color:#333;">细分</div>
<div class="t" style="left:1600px;top:521.5px;font-size:12px;color:#aaa;">拖入字段</div>
<div class="t" style="left:1494.5px;top:549.0px;font-size:12px;color:#333;">标签</div>
<svg class="abs" style="left:1525px;top:550px" width="12" height="12" viewBox="0 0 12 12"><circle cx="6" cy="6" r="2" fill="none" stroke="#444" stroke-width="1.1"/><path d="M6 0.8L7 2.2L8.8 1.7L9.1 3.4L10.8 4L10.2 5.7L11.2 7.1L9.7 8.1L9.8 9.9L8 10L7.1 11.5L5.6 10.6L4 11.3L3.3 9.7L1.5 9.3L1.9 7.6L0.8 6.1L2.2 5L1.9 3.2L3.7 3L4.4 1.4Z" fill="none" stroke="#444" stroke-width="1"/></svg>
<div class="t" style="left:1600px;top:549.0px;font-size:12px;color:#aaa;">拖入字段</div>
<div class="abs" style="left:1479px;top:586px;width:178px;height:1px;background:#e6e6ee"></div>
<svg class="abs" style="left:1479.5px;top:597px" width="10" height="7" viewBox="0 0 10 7"><path d="M1.5 1.5L5 5L8.5 1.5" fill="none" stroke="#222" stroke-width="1.8"/></svg>
<div class="t" style="left:1495px;top:593.5px;font-size:12px;color:#222;font-weight:bold">1-求和(total_view)</div>
<div class="abs" style="left:1479px;top:617px;width:178px;height:28px;border:1px solid #e0e0ea"></div>
<svg class="abs" style="left:1495px;top:619px" width="17" height="23" viewBox="0 0 17 23"><path d="M2 3L3.5 4.5M15 3L13.5 4.5M8.5 0.5V2.2" stroke="#1a9ff0" stroke-width="1.3"/><path d="M8.5 4A5.5 5.5 0 0 0 5.2 14V17H11.8V14A5.5 5.5 0 0 0 8.5 4Z" fill="#1a9ff0"/><rect x="5.2" y="18" width="6.6" height="1.3" fill="#1a9ff0"/><rect x="6" y="20" width="5" height="1.3" fill="#1a9ff0"/></svg>
<div class="t" style="left:1530px;top:625.0px;font-size:12px;color:#333;">自动</div>
<div class="abs" style="left:1634px;top:628px;width:0;height:0;border-left:5px solid transparent;border-right:5px solid transparent;border-top:6px solid #9a9aa6"></div>
<div class="abs" style="left:1479px;top:651px;width:178px;height:118px;border:1px solid #e0e0ea"></div>
<div class="t" style="left:1494.5px;top:658.0px;font-size:12px;color:#333;">颜色</div>
<svg class="abs" style="left:1525px;top:659px" width="12" height="12" viewBox="0 0 12 12"><circle cx="6" cy="6" r="2" fill="none" stroke="#444" stroke-width="1.1"/><path d="M6 0.8L7 2.2L8.8 1.7L9.1 3.4L10.8 4L10.2 5.7L11.2 7.1L9.7 8.1L9.8 9.9L8 10L7.1 11.5L5.6 10.6L4 11.3L3.3 9.7L1.5 9.3L1.9 7.6L0.8 6.1L2.2 5L1.9 3.2L3.7 3L4.4 1.4Z" fill="none" stroke="#444" stroke-width="1"/></svg>
<div class="abs" style="left:1552px;top:655px;width:96px;height:20px;background:#4a8ddf;border-radius:10px"></div>
<div class="t" style="left:1561px;top:658.5px;font-size:12px;color:#fff;">度量名称</div>
<div class="t" style="left:1494.5px;top:690.5px;font-size:12px;color:#333;">尺寸</div>
<svg class="abs" style="left:1525px;top:691.5px" width="12" height="12" viewBox="0 0 12 12"><circle cx="6" cy="6" r="2" fill="none" stroke="#444" stroke-width="1.1"/><path d="M6 0.8L7 2.2L8.8 1.7L9.1 3.4L10.8 4L10.2 5.7L11.2 7.1L9.7 8.1L9.8 9.9L8 10L7.1 11.5L5.6 10.6L4 11.3L3.3 9.7L1.5 9.3L1.9 7.6L0.8 6.1L2.2 5L1.9 3.2L3.7 3L4.4 1.4Z" fill="none" stroke="#444" stroke-width="1"/></svg>
<div class="t" style="left:1600px;top:690.5px;font-size:12px;color:#aaa;">拖入字段</div>
<div class="t" style="left:1494.5px;top:718.5px;font-size:12px;color:#333;">细分</div>
<div class="t" style="left:1600px;top:718.5px;font-size:12px;color:#aaa;">拖入字段</div>
<div class="t" style="left:1494.5px;top:746.0px;font-size:12px;color:#333;">标签</div>
<svg class="abs" style="left:1525px;top:747px" width="12" height="12" viewBox="0 0 12 12"><circle cx="6" cy="6" r="2" fill="none" stroke="#444" stroke-width="1.1"/><path d="M6 0.8L7 2.2L8.8 1.7L9.1 3.4L10.8 4L10.2 5.7L11.2 7.1L9.7 8.1L9.8 9.9L8 10L7.1 11.5L5.6 10.6L4 11.3L3.3 9.7L1.5 9.3L1.9 7.6L0.8 6.1L2.2 5L1.9 3.2L3.7 3L4.4 1.4Z" fill="none" stroke="#444" stroke-width="1"/></svg>
<div class="t" style="left:1600px;top:746.0px;font-size:12px;color:#aaa;">拖入字段</div>
<div class="abs" style="left:1479px;top:783px;width:178px;height:1px;background:#e6e6ee"></div>
<svg class="abs" style="left:1480.5px;top:792.5px" width="7" height="10" viewBox="0 0 7 10"><path d="M1.5 1.5L5 5L1.5 8.5" fill="none" stroke="#222" stroke-width="1.8"/></svg>
<div class="t" style="left:1495px;top:790.5px;font-size:12px;color:#222;font-weight:bold">2-求和(total_export)</div>
<div class="abs" style="left:1470px;top:812px;width:196px;height:1px;background:#e6e6ee"></div>
<svg class="abs" style="left:1479.5px;top:828.5px" width="10" height="7" viewBox="0 0 10 7"><path d="M1.5 1.5L5 5L8.5 1.5" fill="none" stroke="#8b8fa3" stroke-width="1.5"/></svg>
<div class="t" style="left:1497px;top:825.5px;font-size:12px;color:#222;">提示信息</div>
<div class="abs" style="left:1479px;top:853px;width:178px;height:28px;border:1px solid #dedee6;border-radius:2px"></div>
<div class="t" style="left:1556px;top:860.0px;font-size:12px;color:#999;">设置</div>
<!--/PANEL-->
</body></html>
